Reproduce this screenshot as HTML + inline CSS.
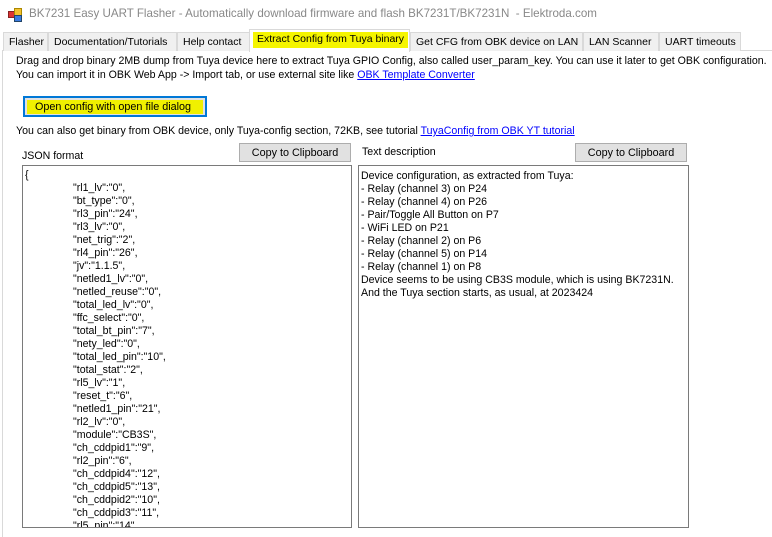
<!DOCTYPE html><html><head><style>
*{margin:0;padding:0;box-sizing:border-box}
body{width:772px;height:537px;background:#fff;font-family:"Liberation Sans",sans-serif;font-size:10.6px;color:#000;position:relative;overflow:hidden}
.a{position:absolute;white-space:pre}
.tab{position:absolute;top:32px;height:19px;background:#f0f0f0;border:1px solid #d9d9d9;border-bottom:none;padding:3px 0 0 5px;font-size:10.5px;white-space:nowrap}
.btn{position:absolute;background:#e1e1e1;border:1px solid #adadad;text-align:center;font-size:10.8px;padding-top:3px;white-space:nowrap}
.box{position:absolute;border:1px solid #7a7a7a;background:#fff;overflow:hidden;line-height:13px;font-size:10.6px;white-space:pre}
.box .i{padding-left:48px}
</style></head><body>
<div class="a" style="left:8px;top:8px;width:15px;height:14px">
<div style="position:absolute;left:0;top:3px;width:7px;height:7px;background:#d33;border:1px solid #822"></div>
<div style="position:absolute;left:6px;top:0;width:8px;height:8px;background:#f3c02c;border:1px solid #a80"></div>
<div style="position:absolute;left:6px;top:7px;width:8px;height:7px;background:#3a7be0;border:1px solid #246"></div>
</div>
<div class="a" style="left:29px;top:7px;font-size:11.6px;color:#888">BK7231 Easy UART Flasher - Automatically download firmware and flash BK7231T/BK7231N  - Elektroda.com</div>
<div style="position:absolute;left:2px;top:50px;width:770px;height:487px;border-left:1px solid #d9d9d9;border-top:1px solid #d9d9d9"></div>
<div class="tab" style="left:3px;width:45px">Flasher</div>
<div class="tab" style="left:48px;width:129px">Documentation/Tutorials</div>
<div class="tab" style="left:177px;width:73px">Help contact</div>
<div class="tab" style="left:249px;top:29px;height:23px;width:161px;background:#fff;padding:0"><div style="margin:2px 1px 0 3px;background:#f5f500;height:16px;padding:1px 0 0 4px">Extract Config from Tuya binary</div></div>
<div class="tab" style="left:410px;width:173px">Get CFG from OBK device on LAN</div>
<div class="tab" style="left:583px;width:76px">LAN Scanner</div>
<div class="tab" style="left:659px;width:82px">UART timeouts</div>
<div class="a" style="left:16px;top:55px">Drag and drop binary 2MB dump from Tuya device here to extract Tuya GPIO Config, also called user_param_key. You can use it later to get OBK configuration.</div>
<div class="a" style="left:16px;top:69px">You can import it in OBK Web App -&gt; Import tab, or use external site like <span style="color:#00f;text-decoration:underline">OBK Template Converter</span></div>
<div style="position:absolute;left:23px;top:96px;width:184px;height:21px;border:2px solid #0078d7;background:#e1e1e1;padding:2px"><div style="background:#f0f000;height:14px;font-size:10.8px;padding-left:8px;line-height:14px;white-space:nowrap">Open config with open file dialog</div></div>
<div class="a" style="left:16px;top:125px">You can also get binary from OBK device, only Tuya-config section, 72KB, see tutorial <span style="color:#00f;text-decoration:underline">TuyaConfig from OBK YT tutorial</span></div>
<div class="a" style="left:22px;top:150px">JSON format</div>
<div class="btn" style="left:239px;top:143px;width:112px;height:19px">Copy to Clipboard</div>
<div class="a" style="left:362px;top:146px">Text description</div>
<div class="btn" style="left:575px;top:143px;width:112px;height:19px">Copy to Clipboard</div>
<div class="box" style="left:22px;top:165px;width:330px;height:363px;padding:3px 0 0 2px">{
<div class="i">"rl1_lv":"0",
"bt_type":"0",
"rl3_pin":"24",
"rl3_lv":"0",
"net_trig":"2",
"rl4_pin":"26",
"jv":"1.1.5",
"netled1_lv":"0",
"netled_reuse":"0",
"total_led_lv":"0",
"ffc_select":"0",
"total_bt_pin":"7",
"nety_led":"0",
"total_led_pin":"10",
"total_stat":"2",
"rl5_lv":"1",
"reset_t":"6",
"netled1_pin":"21",
"rl2_lv":"0",
"module":"CB3S",
"ch_cddpid1":"9",
"rl2_pin":"6",
"ch_cddpid4":"12",
"ch_cddpid5":"13",
"ch_cddpid2":"10",
"ch_cddpid3":"11",
"rl5_pin":"14",</div></div>
<div class="box" style="left:358px;top:165px;width:331px;height:363px;padding:4px 0 0 2px">Device configuration, as extracted from Tuya:
- Relay (channel 3) on P24
- Relay (channel 4) on P26
- Pair/Toggle All Button on P7
- WiFi LED on P21
- Relay (channel 2) on P6
- Relay (channel 5) on P14
- Relay (channel 1) on P8
Device seems to be using CB3S module, which is using BK7231N.
And the Tuya section starts, as usual, at 2023424</div>
</body></html>
